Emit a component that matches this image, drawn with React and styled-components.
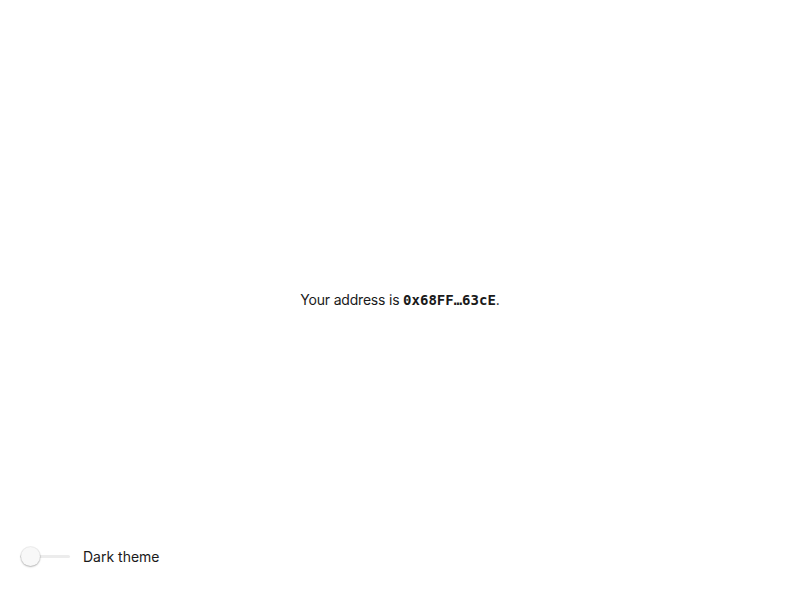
import React, { useState } from "react";
import styled, { createGlobalStyle } from "styled-components";

const Global = createGlobalStyle`
  html, body { margin: 0; padding: 0; background: #fff; }
  body { font-family: Inter, "Noto Sans", sans-serif; color: #1a1a1a; }
`;

const Page = styled.div`
  height: 600px;
  box-sizing: border-box;
  padding-top: 56px;
  display: flex;
  flex-direction: column;
`;

const Main = styled.main`
  flex: 1;
  display: flex;
  align-items: center;
  justify-content: center;
`;

const Message = styled.p`
  margin: 0;
  font-size: 14px;
  line-height: 20px;
  letter-spacing: -0.2px;
`;

const Address = styled.code`
  font-family: "DejaVu Sans Mono", monospace;
  font-weight: 700;
  font-size: 14px;
  letter-spacing: 0;
`;

const Footer = styled.footer`
  display: flex;
  align-items: center;
  gap: 13px;
  padding: 0 0 31px 20px;
  height: 25px;
`;

const SwitchRoot = styled.button`
  position: relative;
  width: 50px;
  height: 24px;
  padding: 0;
  border: none;
  background: transparent;
  cursor: pointer;
`;

const Track = styled.span`
  position: absolute;
  left: 0;
  right: 0;
  top: 10px;
  height: 3px;
  border-radius: 2px;
  background: ${p => (p.$on ? "#9ab" : "#ececec")};
`;

const Thumb = styled.span`
  position: absolute;
  top: 2px;
  left: ${p => (p.$on ? "30px" : "1px")};
  width: 19px;
  height: 19px;
  border-radius: 50%;
  background: #f8f8f8;
  box-shadow: 0 1px 2px rgba(0,0,0,0.25), 0 0 0 1px rgba(0,0,0,0.06);
`;

const Label = styled.span`
  font-size: 14px;
  color: #1a1a1a;
`;

export default function App() {
  const [on, setOn] = useState(false);
  return (
    <Page>
      <Global />
      <Main>
        <Message>
          Your address is <Address>0x68FF…63cE</Address>.
        </Message>
      </Main>
      <Footer>
        <SwitchRoot onClick={() => setOn(!on)} aria-label="Dark theme">
          <Track $on={on} />
          <Thumb $on={on} />
        </SwitchRoot>
        <Label>Dark theme</Label>
      </Footer>
    </Page>
  );
}
